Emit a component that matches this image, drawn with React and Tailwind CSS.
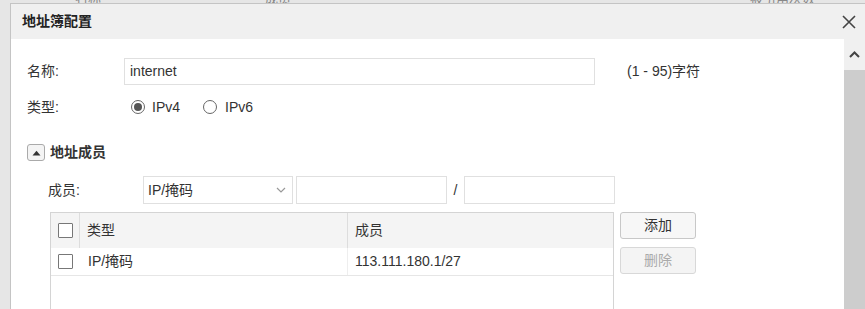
// Address book config dialog
export default function App() {
  const font = { fontFamily: '"Liberation Sans", "Noto Sans CJK SC", sans-serif' };
  return (
    <div className="w-[865px] h-[309px] overflow-hidden bg-[#e6e6e6] text-[#333] text-[14px]" style={font}>
      {/* faded page behind the dialog */}
      <div className="h-[3px] overflow-hidden relative">
        <span className="absolute left-[75px] -top-[11px] text-[#888] text-[13px]">名称</span>
        <span className="absolute left-[265px] -top-[11px] text-[#888] text-[13px]">成员</span>
        <span className="absolute left-[750px] -top-[11px] text-[#888] text-[13px]">被引用次数</span>
      </div>
      <div className="ml-[10px] h-[306px] border-l border-t border-[#c4c4c4] bg-white flex flex-col">
        {/* title bar */}
        <div className="h-[35px] shrink-0 bg-[#f0f0f0] flex items-center pl-[11px] pr-[8px]">
          <span className="font-bold text-[14px] text-[#222]">地址簿配置</span>
          <svg className="ml-auto" width="16" height="16" viewBox="0 0 16 16">
            <path d="M2 2 L14 14 M14 2 L2 14" stroke="#444" strokeWidth="1.6" fill="none" />
          </svg>
        </div>
        <div className="flex flex-1 min-h-0">
          {/* content */}
          <div className="flex-1 pl-[16px] pt-[19px]">
            <div className="flex items-center h-[27px]">
              <span className="w-[97px]">名称:</span>
              <div className="w-[471px] h-[27px] border border-[#e0e0e0] flex items-center pl-[5px]">internet</div>
              <span className="ml-[32px]">(1 - 95)字符</span>
            </div>
            <div className="flex items-center h-[20px] mt-[12px]">
              <span className="w-[104px]">类型:</span>
              <span className="w-[14px] h-[14px] rounded-full border border-[#666] flex items-center justify-center">
                <span className="w-[8px] h-[8px] rounded-full bg-[#555]" />
              </span>
              <span className="ml-[7px]">IPv4</span>
              <span className="ml-[23px] w-[14px] h-[14px] rounded-full border border-[#666]" />
              <span className="ml-[8px]">IPv6</span>
            </div>
            <div className="flex items-center mt-[26px] h-[19px]">
              <span className="w-[18px] h-[17px] rounded-[3px] border border-[#aaa] bg-[#f4f4f4] flex items-center justify-center">
                <svg width="9" height="6" viewBox="0 0 9 6"><path d="M0.5 5.5 L4.5 0.8 L8.5 5.5 Z" fill="#333" /></svg>
              </span>
              <span className="ml-[5px] font-bold">地址成员</span>
            </div>
            <div className="pl-[21px] mt-[14px]">
              <div className="flex items-center h-[28px]">
                <span className="w-[95px]">成员:</span>
                <div className="w-[150px] h-[28px] border border-[#e0e0e0] flex items-center pl-[4px] pr-[6px]">
                  <span>IP/掩码</span>
                  <svg className="ml-auto" width="10" height="6" viewBox="0 0 10 6"><path d="M1 1 L5 5 L9 1" stroke="#999" strokeWidth="1.2" fill="none" /></svg>
                </div>
                <div className="ml-[3px] w-[151px] h-[28px] border border-[#e0e0e0]" />
                <span className="w-[17px] text-center">/</span>
                <div className="w-[151px] h-[28px] border border-[#e0e0e0]" />
              </div>
              <div className="flex mt-[8px] ml-[2px]">
                <div className="w-[564px] h-[120px] border border-[#d4d4d4]">
                  <div className="flex h-[35px] bg-[#f4f4f4]">
                    <div className="w-[29px] border-r border-[#ddd] flex items-center justify-center">
                      <span className="w-[15px] h-[15px] border border-[#777] rounded-[1px] bg-white" />
                    </div>
                    <div className="w-[268px] border-r border-[#ddd] flex items-center pl-[7px]">类型</div>
                    <div className="flex-1 flex items-center pl-[7px]">成员</div>
                  </div>
                  <div className="flex h-[28px] border-b border-[#e6e6e6]">
                    <div className="w-[29px] flex items-center justify-center">
                      <span className="w-[15px] h-[15px] border border-[#777] rounded-[1px]" />
                    </div>
                    <div className="w-[268px] border-r border-[#eee] flex items-center pl-[8px]">IP/掩码</div>
                    <div className="flex-1 flex items-center pl-[7px]">113.111.180.1/27</div>
                  </div>
                </div>
                <div className="ml-[6px] flex flex-col gap-[8px]">
                  <button className="w-[76px] h-[27px] border border-[#c8c8c8] rounded-[3px] bg-[#f7f7f7] text-[#333]">添加</button>
                  <button className="w-[76px] h-[27px] border border-[#d8d8d8] rounded-[3px] bg-[#f4f4f4] text-[#aaa]">删除</button>
                </div>
              </div>
            </div>
          </div>
          {/* scrollbar */}
          <div className="w-[21px] shrink-0 flex flex-col bg-[#cdcdcd]">
            <div className="h-[31px] bg-[#f0f0f0] flex items-center justify-center">
              <svg width="11" height="7" viewBox="0 0 11 7"><path d="M1 6 L5.5 1.5 L10 6" stroke="#444" strokeWidth="2" fill="none" /></svg>
            </div>
          </div>
        </div>
      </div>
    </div>
  );
}
